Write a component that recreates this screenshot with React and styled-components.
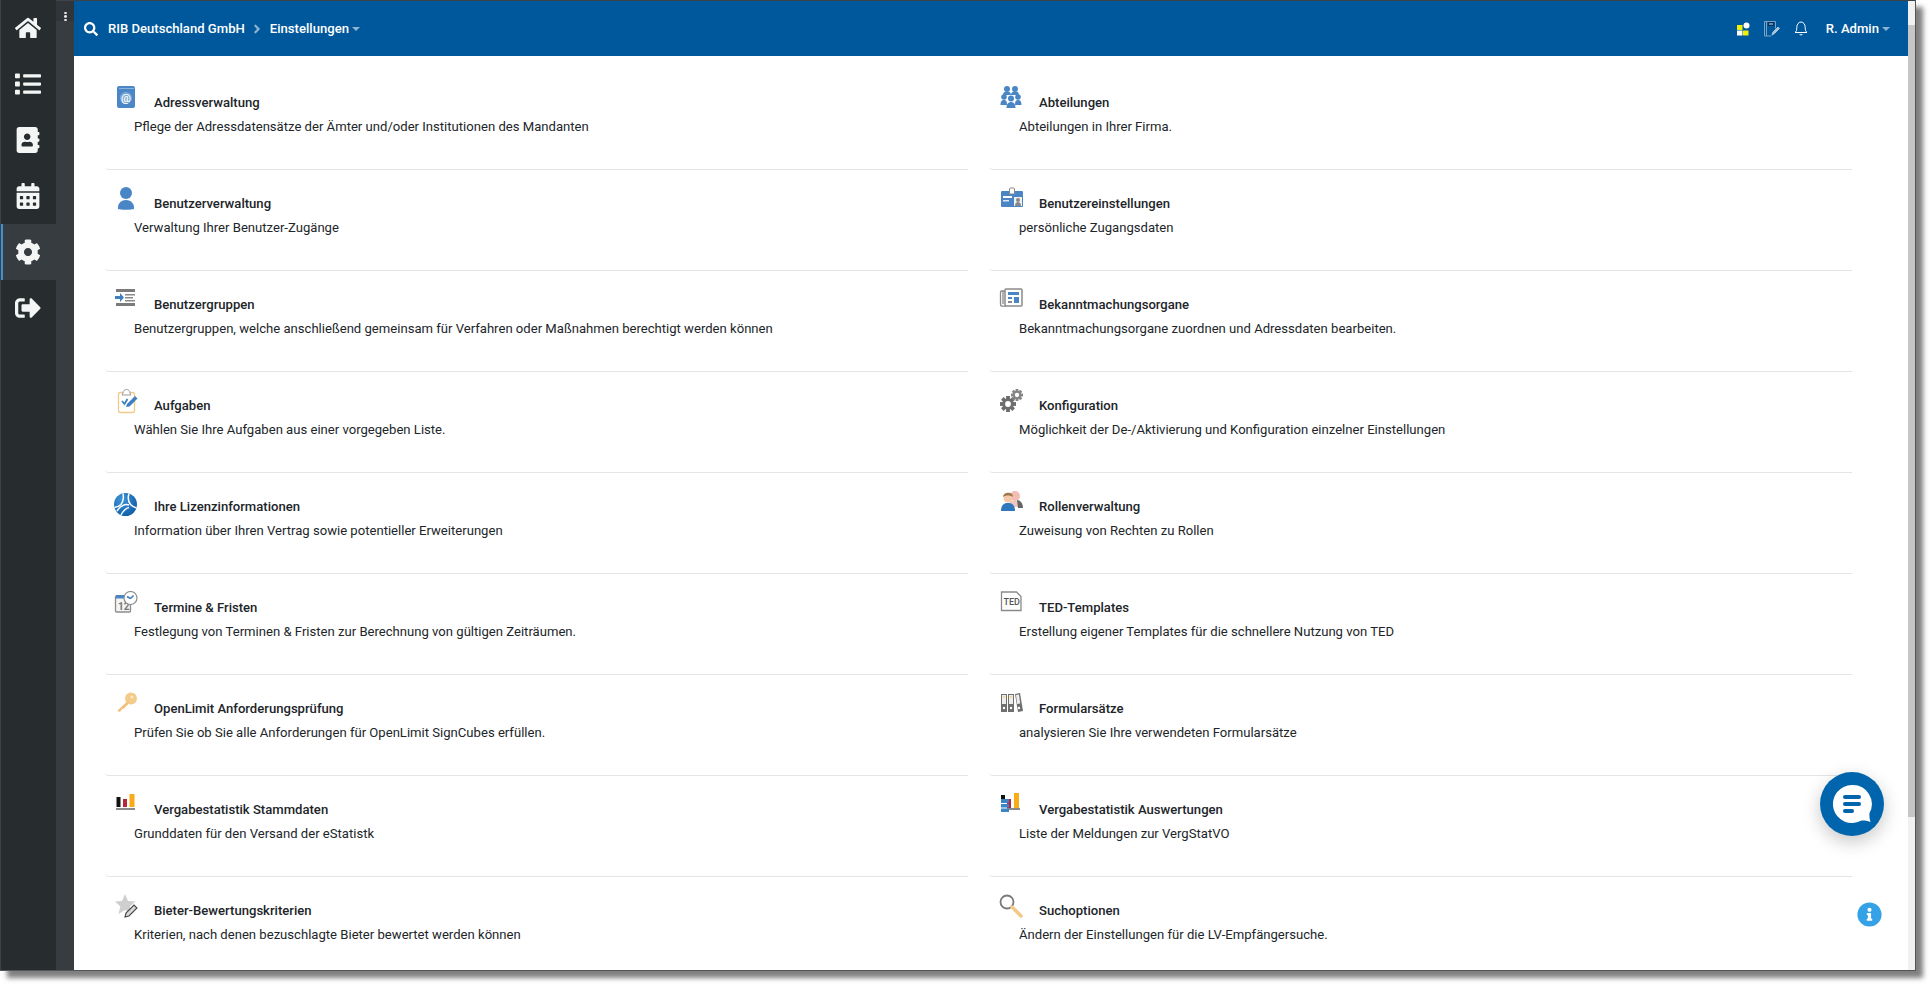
import React from "react";
import styled, { createGlobalStyle } from "styled-components";
import { FaHome, FaList, FaAddressBook, FaCalendarAlt, FaCog, FaSignOutAlt, FaSearch, FaInfoCircle, FaAngleRight } from "react-icons/fa";

const GlobalStyle = createGlobalStyle`
  html, body { margin: 0; padding: 0; background: #fff; }
  body { font-family: Roboto, "Liberation Sans", sans-serif; overflow: hidden; height: 986px; }
`;

const Frame = styled.div`
  box-sizing: border-box;
  width: 1916px;
  height: 971px;
  display: flex;
  background: #fff;
  border-top: 1px solid #3c4245;
  border-right: 1px solid #50565a;
  border-bottom: 1px solid #50565a;
  box-shadow: 7px 7px 5px rgba(0, 0, 0, 0.5);
  position: relative;
`;

const Sidebar = styled.nav`
  width: 55px;
  flex: none;
  margin-top: -1px;
  background: #272c2e;
  border-left: 1px solid #3c4245;
  display: flex;
  flex-direction: column;
`;

const NavItem = styled.div`
  height: 56px;
  box-sizing: border-box;
  display: flex;
  align-items: center;
  justify-content: center;
  color: #f4f5f5;
  font-size: 26px;
  background: ${(p) => (p.$active ? "#363c3f" : "transparent")};
  border-left: 2px solid ${(p) => (p.$active ? "#3d92d8" : "transparent")};
  padding-right: 4px;
`;

const Rail = styled.div`
  width: 18px;
  flex: none;
  background: #363c3f;
`;

const RailHandle = styled.div`
  height: 20px;
  background: #2f3538;
  display: flex;
  flex-direction: column;
  align-items: center;
  gap: 1px;
  padding-top: 11px;
  box-sizing: border-box;
`;

const Dot = styled.span`
  width: 3px;
  height: 3px;
  border-radius: 50%;
  background: #e6e8e8;
`;

const Content = styled.div`
  flex: 1;
  min-width: 0;
  display: flex;
  flex-direction: column;
`;

const TopBar = styled.header`
  height: 55px;
  flex: none;
  background: #00589c;
  color: #fff;
  display: flex;
  align-items: center;
  padding: 0 18px 0 10px;
  font-size: 13.1px;
  font-weight: 500;
`;

const Crumb = styled.span`
  white-space: nowrap;
`;

const SearchGlyph = styled.span`
  display: flex;
  font-size: 14px;
  margin-right: 10px;
`;

const Separator = styled.span`
  display: flex;
  font-size: 14px;
  color: #8fb3d3;
  margin: 0 6px 0 5px;
`;

const Caret = styled.span`
  width: 0;
  height: 0;
  margin-left: 3px;
  margin-top: 1px;
  border-left: 4px solid transparent;
  border-right: 4px solid transparent;
  border-top: 4px solid #8fb3d3;
`;

const Spacer = styled.div`
  flex: 1;
`;

const TopIcons = styled.div`
  display: flex;
  align-items: center;
  gap: 14px;
  margin-right: 18px;
`;

const Main = styled.main`
  flex: 1;
  min-width: 0;
  padding: 13px 55px 0 31px;
  display: grid;
  grid-template-columns: 863px 863px;
  column-gap: 21px;
  grid-auto-rows: 101px;
  align-content: start;
`;

const Item = styled.article`
  box-sizing: border-box;
  height: 101px;
  border-bottom: ${(p) => (p.$last ? "0" : "1px solid #e5e5e5")};
  border-bottom-left-radius: 4px;
  padding: 17px 0 0 8px;
  color: #212529;

  &:nth-child(even) {
    padding-left: 9px;
  }
`;

const ItemHead = styled.div`
  display: flex;
  align-items: flex-start;
  height: 26px;
`;

const ItemIcon = styled.div`
  width: 26px;
  height: 26px;
  flex: none;
  margin-right: 15px;
`;

const ItemTitle = styled.h3`
  margin: 9px 0 0;
  font-size: 13.1px;
  line-height: 16px;
  font-weight: 500;
  color: #212529;
`;

const ItemText = styled.p`
  margin: 7px 0 0 21px;
  font-size: 13.1px;
  line-height: 16px;
  font-weight: 400;
  color: #212529;
`;

const ScrollTrack = styled.div`
  width: 7px;
  flex: none;
  background: #f1f1f1;
  padding-top: 24px;
  box-sizing: border-box;
`;

const ScrollThumb = styled.div`
  height: 792px;
  background: #c6c6c6;
`;

const ChatButton = styled.div`
  position: absolute;
  left: 1820px;
  top: 771px;
  width: 64px;
  height: 64px;
  border-radius: 50%;
  background: #0065ad;
  box-shadow: 0 6px 18px rgba(0, 0, 0, 0.22);
  display: flex;
  align-items: center;
  justify-content: center;
`;

const InfoButton = styled.div`
  position: absolute;
  left: 1857px;
  top: 901px;
  width: 25px;
  height: 25px;
  display: flex;
  color: #35a2e8;
  font-size: 25px;
`;

const Svg = ({ children, size = 26 }) => (
  <svg width={size} height={size} viewBox="0 0 26 26" style={{ display: "block" }}>
    {children}
  </svg>
);

const AddressIcon = () => (
  <Svg>
    <rect x="4" y="0" width="18" height="22" rx="2" fill="#4b87c6" />
    <rect x="6" y="2" width="15" height="1" fill="#8db5dc" />
    <circle cx="13" cy="12" r="6" fill="#7ea9d6" />
    <text x="13" y="15.500" textAnchor="middle" fontSize="11" fontWeight="500" fontFamily="Roboto, sans-serif" fill="#fff">@</text>
  </Svg>
);

const UserIcon = () => (
  <Svg>
    <circle cx="13" cy="6" r="6" fill="#4a86c5" />
    <path d="M5 22c-.6-5 2.600-9 8-9s8.600 4 8 9c-2 1-14 1-16 0z" fill="#4a86c5" />
  </Svg>
);

const IndentIcon = () => (
  <Svg>
    <rect x="3" y="1" width="19" height="3" fill="#7b7b7b" />
    <rect x="12" y="6" width="10" height="1.500" fill="#8a8a8a" />
    <rect x="12" y="9" width="8" height="1.500" fill="#8a8a8a" />
    <rect x="12" y="12" width="10" height="1.500" fill="#8a8a8a" />
    <rect x="3" y="15" width="19" height="3" fill="#7b7b7b" />
    <path d="M2 8h5V5l4 4.500-4 4.500v-3H2z" fill="#3d7fc1" />
  </Svg>
);

const TaskIcon = () => (
  <Svg>
    <rect x="5.500" y="3.500" width="16" height="20" rx="2" fill="#fff" stroke="#f1c98a" strokeWidth="1.300" />
    <path d="M10 4c0-2 1.500-3.500 3.500-3.500S17 2 17 4l1 2H9z" fill="#fff" stroke="#9a9a9a" />
    <path d="M9 12l2.500 3 3-5" fill="none" stroke="#3d7fc1" strokeWidth="1.800" />
    <path d="M13 18l1-3 8-8 2.500 2.500-8 8z" fill="#3d7fc1" />
  </Svg>
);

const LicenseIcon = () => (
  <Svg>
    <defs>
      <radialGradient id="lic" cx="35%" cy="30%" r="80%">
        <stop offset="0" stopColor="#3f95d8" />
        <stop offset="1" stopColor="#0c5aa5" />
      </radialGradient>
    </defs>
    <circle cx="12.500" cy="14.500" r="11.500" fill="url(#lic)" />
    <path d="M10 3.500c1 5 .5 8-2 11-1.500 1.500-4 2.500-6.500 3M16 3.500c-1.500 5-1 8 1.500 11 1.500 1.500 4 3 6 3.500M4 21c3-5 8-7.500 12-6M8 25c1.500-3 5-7 8-7.500" fill="none" stroke="#fff" strokeWidth="1.500" />
  </Svg>
);

const TermIcon = () => (
  <Svg>
    <rect x="2.500" y="5" width="15" height="16" rx="1" fill="#f4f4f4" stroke="#8c8c8c" strokeWidth="1.300" />
    <rect x="3" y="4" width="9" height="3.500" fill="#4a86c5" />
    <text x="5" y="19" fontSize="10" fontWeight="700" fontFamily="Roboto, sans-serif" fill="#777">12</text>
    <circle cx="17.500" cy="7" r="6.500" fill="#fff" stroke="#8c8c8c" strokeWidth="1.200" />
    <path d="M17.500 7.500l-3.500-2M17.500 7.500l3-3" stroke="#3d7fc1" strokeWidth="1.600" fill="none" />
  </Svg>
);

const KeyIcon = () => (
  <Svg>
    <circle cx="18" cy="6.500" r="6" fill="#f3cb8b" />
    <circle cx="19" cy="5" r="1.500" fill="#fbe9cb" />
    <path d="M14 9.500L4.500 18.500l1.500 1.500 2-1 1-2 2-.5 5-5z" fill="#f1c27c" />
  </Svg>
);

const BarsIcon = () => (
  <Svg>
    <rect x="3.500" y="4" width="4" height="10" fill="#111" />
    <rect x="10" y="6" width="4" height="8" fill="#b5263a" />
    <rect x="16.500" y="1" width="5" height="13" fill="#f8ac17" />
    <rect x="3" y="15" width="19" height="2" fill="#8a8a8a" />
  </Svg>
);

const StarIcon = () => (
  <Svg>
    <path d="M10 0l3 7 7.500.6-5.700 5 1.800 7.400L10 16l-6.500 4 1.800-7.400L0 7.600 7 7z" transform="translate(2 0)" fill="#cfcfcf" />
    <path d="M12 23l1-4 8-8 3 3-8 8z" fill="#d8d8d8" stroke="#444" strokeWidth="1.100" />
  </Svg>
);

const GroupIcon = () => (
  <Svg>
    <g fill="#4a86c5">
      <circle cx="9" cy="3" r="3" />
      <circle cx="17" cy="3" r="3" />
      <path d="M5 9c0-2.500 1.500-3.500 4-3.500s4 1 4 3.500zM13 9c0-2.500 1.500-3.500 4-3.500s4 1 4 3.500z" />
      <circle cx="6" cy="11" r="2.800" />
      <circle cx="20" cy="11" r="2.800" />
      <circle cx="13" cy="12.500" r="3" />
      <path d="M2.500 19c0-4 1.500-5 3.500-5s3 1 3 5zM17 19c0-4 1-5 3-5s3.500 1 3.500 5z" />
      <path d="M8.500 22c0-4 2-6 4.500-6s4.500 2 4.500 6z" />
    </g>
  </Svg>
);

const BadgeIcon = () => (
  <Svg>
    <rect x="3" y="4" width="22" height="16" rx="1" fill="#4a86c5" />
    <rect x="11.500" y="1" width="5" height="6" rx="1" fill="#fff" stroke="#888" />
    <rect x="5" y="9" width="9" height="2" fill="#fff" />
    <rect x="5" y="13" width="6" height="1.500" fill="#dbe7f3" />
    <rect x="16" y="10" width="8" height="9" fill="#f0f0f0" />
    <circle cx="20" cy="13" r="2" fill="#888" />
    <path d="M17 19c0-3 1.500-4 3-4s3 1 3 4z" fill="#888" />
  </Svg>
);

const NewsIcon = () => (
  <Svg>
    <rect x="7" y="1" width="17" height="17" rx="1" fill="#fff" stroke="#8a8a8a" strokeWidth="1.500" />
    <path d="M7 3H3.500C3 3 2.500 3.500 2.500 4v12c0 1.500 1 2.200 2 2.200H8M5 3v13" fill="none" stroke="#8a8a8a" strokeWidth="1.300" />
    <rect x="10" y="4" width="11" height="3" fill="#4a86c5" />
    <rect x="10" y="9" width="4" height="2" fill="#4a86c5" />
    <rect x="10" y="13" width="4" height="2" fill="#888" />
    <rect x="16" y="9" width="5" height="6" fill="#4a86c5" />
  </Svg>
);

const Gear = ({ cx, cy, r, fill = "#6d6d6d" }) => {
  const teeth = [0, 45, 90, 135];
  return (
    <g fill={fill}>
      {teeth.map((a) => (
        <rect key={a} x={cx - r * 0.24} y={cy - r} width={r * 0.48} height={r * 2} transform={`rotate(${a} ${cx} ${cy})`} />
      ))}
      <circle cx={cx} cy={cy} r={r * 0.72} />
      <circle cx={cx} cy={cy} r={r * 0.36} fill="#fff" />
    </g>
  );
};

const GearsIcon = () => (
  <Svg>
    <Gear cx={10} cy={15} r={8} />
    <Gear cx={19} cy={6} r={6} fill="#858585" />
  </Svg>
);

const RolesIcon = () => (
  <Svg>
    <circle cx="17" cy="6" r="5" fill="#f2bdb2" />
    <path d="M12 11h10l1 6H11z" fill="#f0c8c0" />
    <path d="M19 10c3 0 6 3 6 8h-5z" fill="#666" />
    <circle cx="10" cy="8" r="4.500" fill="#f5c9a8" />
    <path d="M5 7c0-5 10-6 10 0-3-2-7-2-10 0z" fill="#a07850" />
    <path d="M3 21c0-6 3-8 7-8s7 2 7 8z" fill="#2f78bd" />
  </Svg>
);

const TedIcon = () => (
  <Svg>
    <path d="M3.500 1h15l4.500 4.500V19.500H3.500z" fill="#fff" stroke="#8a8a8a" strokeWidth="1.300" />
    <text x="5.500" y="14" fontSize="9" fontWeight="500" fontFamily="Roboto, sans-serif" fill="#555">TED</text>
  </Svg>
);

const BindersIcon = () => (
  <Svg>
    <rect x="3" y="2" width="6" height="18" fill="#6f6f6f" />
    <rect x="10" y="2" width="6" height="18" fill="#6f6f6f" />
    <path d="M17 2l5-1 3 18-5 1z" fill="#6f6f6f" />
    <rect x="4" y="3" width="4" height="9" fill="#eee" />
    <rect x="11" y="3" width="4" height="9" fill="#eee" />
    <path d="M18 3l3-.500 1.200 9-3 .500z" fill="#eee" />
    <rect x="5" y="4" width="2" height="2" fill="#f3d98a" />
    <rect x="12" y="4" width="2" height="2" fill="#f3d98a" />
    <circle cx="6" cy="16" r="1.200" fill="#fff" />
    <circle cx="13" cy="16" r="1.200" fill="#fff" />
    <circle cx="21" cy="16" r="1.200" fill="#fff" />
  </Svg>
);

const BarsFileIcon = () => (
  <Svg>
    <rect x="9" y="6" width="4" height="10" fill="#b5263a" />
    <rect x="16" y="0" width="5" height="16" fill="#f8ac17" />
    <rect x="9" y="15" width="13" height="2" fill="#8a8a8a" />
    <rect x="3" y="2" width="4" height="4" fill="#111" />
    <rect x="3" y="6" width="8" height="4" fill="#3d84c6" />
    <rect x="3" y="11" width="8" height="3.500" fill="#3d84c6" />
    <rect x="3" y="15.500" width="8" height="3.500" fill="#3d84c6" />
  </Svg>
);

const LensIcon = () => (
  <Svg>
    <circle cx="9" cy="8" r="6.500" fill="#fff" stroke="#7a7a7a" strokeWidth="1.800" />
    <path d="M14 13l9 9" stroke="#f3c98a" strokeWidth="3.500" strokeLinecap="round" />
  </Svg>
);

const TilesIcon = () => (
  <svg width="14" height="14" viewBox="0 0 14 14" style={{ display: "block" }}>
    <rect x="1" y="3" width="5.500" height="5" fill="#f4ee00" />
    <circle cx="10.500" cy="3.500" r="3" fill="#fff" />
    <rect x="1" y="8.500" width="5.500" height="5" fill="#fff" />
    <rect x="7" y="8.500" width="5.500" height="5" fill="#f4ee00" />
  </svg>
);

const NoteIcon = () => (
  <svg width="16" height="16" viewBox="0 0 16 16" style={{ display: "block" }} fill="none" stroke="#7ba3c6">
    <path d="M.500.500h11v7M.500.500v14.500h7M2.500.500v14.500" />
    <rect x="4.500" y="1.500" width="5" height="3" stroke="#0b2f52" fill="#5f90ba" />
    <path d="M8 14l1-3 5-5 1.500 1.500-5 5z" fill="#a9c5dc" stroke="#a9c5dc" />
  </svg>
);

const BellIcon = () => (
  <svg width="14" height="15" viewBox="0 0 14 15" style={{ display: "block" }} fill="none" stroke="#fff" strokeWidth="1">
    <path d="M1 11.500c1.500-1 1.800-2.500 1.800-5C2.800 3.500 4.500 1 7 1s4.200 2.500 4.200 5.500c0 2.500.3 4 1.800 5z" />
    <path d="M5.500 13c.3 1.200 2.700 1.200 3 0" />
  </svg>
);

const ChatIcon = () => (
  <svg width="40" height="40" viewBox="0 0 40 40" style={{ display: "block" }}>
    <path d="M20 1a19 19 0 1 0 9 35.700c2.500-.3 5.500.1 9.500 1.300-1-3-1.300-6-1-9A19 19 0 0 0 20 1z" fill="#fff" />
    <rect x="11" y="11" width="18" height="4" rx="2" fill="#0065ad" />
    <rect x="11" y="18" width="18" height="4" rx="2" fill="#0065ad" />
    <rect x="11" y="25" width="11" height="4" rx="2" fill="#0065ad" />
  </svg>
);

const entries = [
  [AddressIcon, "Adressverwaltung", "Pflege der Adressdatensätze der Ämter und/oder Institutionen des Mandanten"],
  [GroupIcon, "Abteilungen", "Abteilungen in Ihrer Firma."],
  [UserIcon, "Benutzerverwaltung", "Verwaltung Ihrer Benutzer-Zugänge"],
  [BadgeIcon, "Benutzereinstellungen", "persönliche Zugangsdaten"],
  [IndentIcon, "Benutzergruppen", "Benutzergruppen, welche anschließend gemeinsam für Verfahren oder Maßnahmen berechtigt werden können"],
  [NewsIcon, "Bekanntmachungsorgane", "Bekanntmachungsorgane zuordnen und Adressdaten bearbeiten."],
  [TaskIcon, "Aufgaben", "Wählen Sie Ihre Aufgaben aus einer vorgegeben Liste."],
  [GearsIcon, "Konfiguration", "Möglichkeit der De-/Aktivierung und Konfiguration einzelner Einstellungen"],
  [LicenseIcon, "Ihre Lizenzinformationen", "Information über Ihren Vertrag sowie potentieller Erweiterungen"],
  [RolesIcon, "Rollenverwaltung", "Zuweisung von Rechten zu Rollen"],
  [TermIcon, "Termine & Fristen", "Festlegung von Terminen & Fristen zur Berechnung von gültigen Zeiträumen."],
  [TedIcon, "TED-Templates", "Erstellung eigener Templates für die schnellere Nutzung von TED"],
  [KeyIcon, "OpenLimit Anforderungsprüfung", "Prüfen Sie ob Sie alle Anforderungen für OpenLimit SignCubes erfüllen."],
  [BindersIcon, "Formularsätze", "analysieren Sie Ihre verwendeten Formularsätze"],
  [BarsIcon, "Vergabestatistik Stammdaten", "Grunddaten für den Versand der eStatistk"],
  [BarsFileIcon, "Vergabestatistik Auswertungen", "Liste der Meldungen zur VergStatVO"],
  [StarIcon, "Bieter-Bewertungskriterien", "Kriterien, nach denen bezuschlagte Bieter bewertet werden können"],
  [LensIcon, "Suchoptionen", "Ändern der Einstellungen für die LV-Empfängersuche."],
];

export default function App() {
  return (
    <>
      <GlobalStyle />
      <Frame>
        <Sidebar>
          <NavItem><FaHome /></NavItem>
          <NavItem><FaList /></NavItem>
          <NavItem><FaAddressBook /></NavItem>
          <NavItem><FaCalendarAlt /></NavItem>
          <NavItem $active><FaCog /></NavItem>
          <NavItem><FaSignOutAlt /></NavItem>
        </Sidebar>
        <Rail>
          <RailHandle>
            <Dot />
            <Dot />
            <Dot />
          </RailHandle>
        </Rail>
        <Content>
          <TopBar>
            <SearchGlyph><FaSearch /></SearchGlyph>
            <Crumb>RIB Deutschland GmbH</Crumb>
            <Separator><FaAngleRight /></Separator>
            <Crumb>Einstellungen</Crumb>
            <Caret />
            <Spacer />
            <TopIcons>
              <TilesIcon />
              <NoteIcon />
              <BellIcon />
            </TopIcons>
            <Crumb>R. Admin</Crumb>
            <Caret />
          </TopBar>
          <Main>
            {entries.map(([Icon, title, text], i) => (
              <Item key={title} $last={i >= entries.length - 2}>
                <ItemHead>
                  <ItemIcon><Icon /></ItemIcon>
                  <ItemTitle>{title}</ItemTitle>
                </ItemHead>
                <ItemText>{text}</ItemText>
              </Item>
            ))}
          </Main>
        </Content>
        <ScrollTrack>
          <ScrollThumb />
        </ScrollTrack>
        <ChatButton><ChatIcon /></ChatButton>
        <InfoButton><FaInfoCircle /></InfoButton>
      </Frame>
    </>
  );
}
